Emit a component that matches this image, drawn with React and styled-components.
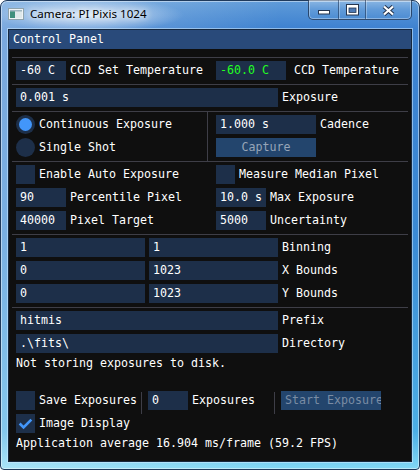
import React from 'react';
import styled, { createGlobalStyle } from 'styled-components';

const MONO = `"DejaVu Sans Mono", "Liberation Mono", monospace`;

const GlobalStyle = createGlobalStyle`
  html, body { margin: 0; padding: 0; background: #ffffff; }
  body { width: 420px; height: 470px; overflow: hidden; }
`;

/* ---------- Windows 7 frame ---------- */
const Frame = styled.div`
  position: relative;
  width: 420px;
  height: 470px;
  box-sizing: border-box;
  display: flex;
  flex-direction: column;
  border: 1px solid #1f3a5c;
  border-radius: 7px 7px 4px 4px;
  box-shadow: inset 0 0 0 1px rgba(255, 255, 255, 0.45);
  background:
    radial-gradient(ellipse 95px 17px at 88px 14px, rgba(255,255,255,0.75), rgba(255,255,255,0) 100%),
    linear-gradient(90deg, rgba(255,255,255,0.32) 0px, rgba(255,255,255,0) 280px),
    linear-gradient(180deg, #5f9bd9 0px, #3c80cf 29px, #3b8ad5 50%, #4caee6 92%, #82d8f5 100%);
`;

const TitleBar = styled.div`
  height: 28px;
  flex: none;
  display: flex;
  align-items: flex-start;
`;

const AppIcon = styled.svg`
  flex: none;
  margin: 7px 0 0 7px;
`;

const TitleText = styled.span`
  margin: 5px 0 0 6px;
  font-family: "Noto Sans", "Open Sans", sans-serif;
  font-size: 11.6px;
  line-height: 16px;
  color: #000;
  text-shadow: 0 0 6px rgba(255,255,255,0.95), 0 0 10px rgba(255,255,255,0.8);
`;

const CaptionGroup = styled.div`
  margin: -1px 7px 0 auto;
  height: 20px;
  display: flex;
  box-sizing: border-box;
  border: 1px solid rgba(24, 44, 74, 0.75);
  border-top: none;
  border-radius: 0 0 5px 5px;
  overflow: hidden;
  box-shadow: inset 0 0 0 1px rgba(255,255,255,0.35);
  background: linear-gradient(180deg, rgba(255,255,255,0.28) 0%, rgba(255,255,255,0.08) 50%, rgba(255,255,255,0.02) 100%);
`;

const CaptionButton = styled.div`
  width: ${p => p.$w}px;
  height: 100%;
  box-sizing: border-box;
  display: flex;
  justify-content: center;
  align-items: flex-start;
  padding-top: ${p => p.$top}px;
  border-left: ${p => (p.$first ? 'none' : '1px solid rgba(24, 44, 74, 0.55)')};
  box-shadow: ${p => (p.$first ? 'none' : 'inset 1px 0 0 rgba(255,255,255,0.3)')};
`;

/* ---------- ImGui client ---------- */
const Client = styled.div`
  flex: 1;
  margin: 0 7px 7px;
  border: 1px solid #16283f;
  box-shadow: 0 0 0 1px rgba(210, 235, 255, 0.55);
  background: #0f0f0f;
  display: flex;
  flex-direction: column;
  font-family: ${MONO};
  font-size: 11.63px;
  line-height: 13px;
  color: #ffffff;
`;

const ImTitle = styled.div`
  height: 19px;
  flex: none;
  box-sizing: border-box;
  padding: 3px 4px;
  background: #294a7a;
  white-space: pre;
`;

const Body = styled.div`
  display: flex;
  flex-direction: column;
  gap: 4px;
  padding: 8px 7px;
`;

const Separator = styled.div`
  height: 1px;
  flex: none;
  background: #3e3e47;
  margin: 0 -4px -1px;
`;

const Columns = styled.div`
  display: grid;
  grid-template-columns: 191px 1fr;
  margin: ${p => (p.$divided ? '-3px 0 -4px' : '0')};
`;

const Cell = styled.div`
  display: flex;
  flex-direction: column;
  gap: 4px;
  padding-top: ${p => (p.$divided ? 3 : 0)}px;
  padding-bottom: ${p => (p.$divided ? 4 : 0)}px;
  padding-left: ${p => (p.$right ? 8 : 0)}px;
  border-left: ${p => (p.$right ? `1px solid ${p.$divided ? '#3e3e47' : 'transparent'}` : 'none')};
`;

const Row = styled.div`
  display: flex;
  align-items: center;
  height: 19px;
  flex: none;
`;

const Field = styled.div`
  flex: none;
  box-sizing: border-box;
  width: ${p => p.$w}px;
  height: 19px;
  padding: 3px 4px;
  margin-left: ${p => p.$gap || 0}px;
  background: #1d2f49;
  color: ${p => p.$color || '#ffffff'};
  white-space: pre;
  overflow: hidden;
`;

const Label = styled.span`
  margin-left: ${p => (p.$gap ?? 4)}px;
  white-space: pre;
`;

const TextLine = styled.div`
  height: 13px;
  flex: none;
  white-space: pre;
`;

const Box = styled.div`
  flex: none;
  width: 19px;
  height: 19px;
  background: #1d2f49;
  display: flex;
`;

const RadioOuter = styled.div`
  flex: none;
  width: 19px;
  height: 19px;
  border-radius: 50%;
  background: #1d2f49;
  display: flex;
  align-items: center;
  justify-content: center;
`;

const RadioDot = styled.div`
  width: 13px;
  height: 13px;
  border-radius: 50%;
  background: #4296fa;
`;

const Button = styled.div`
  flex: none;
  box-sizing: border-box;
  width: ${p => p.$w}px;
  height: 19px;
  margin-left: ${p => p.$gap || 0}px;
  padding: 3px 4px;
  background: #23456d;
  color: ${p => p.$color};
  display: flex;
  justify-content: ${p => p.$align || 'center'};
  white-space: pre;
  overflow: hidden;
`;

const VSep = styled.div`
  flex: none;
  align-self: flex-start;
  width: 1px;
  height: 22px;
  margin-top: 1px;
  margin-left: ${p => p.$gap}px;
  background: #3e3e47;
`;

const Checkbox = ({ checked }) => (
  <Box>
    {checked && (
      <svg width="19" height="19" viewBox="0 0 19 19">
        <polyline points="3.65,9.5 7.55,13.4 15.35,5.6" fill="none" stroke="#4296fa" strokeWidth="2.6" />
      </svg>
    )}
  </Box>
);

const Radio = ({ active }) => <RadioOuter>{active && <RadioDot />}</RadioOuter>;

export default function App() {
  return (
    <>
      <GlobalStyle />
      <Frame>
        <TitleBar>
          <AppIcon width="16" height="12" viewBox="0 0 16 12">
            <rect x="0.5" y="0.5" width="15" height="11" fill="#eef3f6" stroke="#8fa3ad" />
            <rect x="2" y="2" width="5" height="8" fill="#3f8f7c" />
            <rect x="7" y="2" width="7" height="8" fill="#dfe8ea" />
            <rect x="2" y="2" width="12" height="1.5" fill="#9fb6c0" />
          </AppIcon>
          <TitleText>Camera: PI Pixis 1024</TitleText>
          <CaptionGroup>
            <CaptionButton $w={29} $top={10} $first>
              <svg width="12" height="5" viewBox="0 0 12 5">
                <rect x="0.5" y="0.5" width="11" height="3.5" fill="#ffffff" stroke="#263650" />
              </svg>
            </CaptionButton>
            <CaptionButton $w={27} $top={4}>
              <svg width="13" height="12" viewBox="0 0 13 12">
                <rect x="0.5" y="0.5" width="12" height="10.5" fill="#ffffff" stroke="#263650" />
                <rect x="3" y="4" width="7" height="4.5" fill="#4c79b4" stroke="#263650" strokeWidth="0.8" />
              </svg>
            </CaptionButton>
            <CaptionButton $w={46} $top={5}>
              <svg width="13" height="11" viewBox="0 0 13 11">
                <path d="M2 1.5 L11 9.5 M11 1.5 L2 9.5" stroke="#263650" strokeWidth="4.2" />
                <path d="M2 1.5 L11 9.5 M11 1.5 L2 9.5" stroke="#ffffff" strokeWidth="2.2" />
              </svg>
            </CaptionButton>
          </CaptionGroup>
        </TitleBar>

        <Client>
          <ImTitle>Control Panel</ImTitle>
          <Body>
            <Separator />
            <Columns>
              <Cell>
                <Row>
                  <Field $w={50}>-60 C</Field>
                  <Label>CCD Set Temperature</Label>
                </Row>
              </Cell>
              <Cell $right>
                <Row>
                  <Field $w={70} $color="#22ff22">-60.0 C</Field>
                  <Label $gap={8}>CCD Temperature</Label>
                </Row>
              </Cell>
            </Columns>
            <Separator />
            <Row>
              <Field $w={262}>0.001 s</Field>
              <Label>Exposure</Label>
            </Row>
            <Separator />
            <Columns $divided>
              <Cell $divided>
                <Row>
                  <Radio active />
                  <Label>Continuous Exposure</Label>
                </Row>
                <Row>
                  <Radio />
                  <Label>Single Shot</Label>
                </Row>
              </Cell>
              <Cell $divided $right>
                <Row>
                  <Field $w={100}>1.000 s</Field>
                  <Label>Cadence</Label>
                </Row>
                <Row>
                  <Button $w={100} $color="#97a5b8">Capture</Button>
                </Row>
              </Cell>
            </Columns>
            <Separator />
            <Columns>
              <Cell>
                <Row>
                  <Checkbox />
                  <Label>Enable Auto Exposure</Label>
                </Row>
                <Row>
                  <Field $w={50}>90</Field>
                  <Label>Percentile Pixel</Label>
                </Row>
                <Row>
                  <Field $w={50}>40000</Field>
                  <Label>Pixel Target</Label>
                </Row>
              </Cell>
              <Cell $right>
                <Row>
                  <Checkbox />
                  <Label>Measure Median Pixel</Label>
                </Row>
                <Row>
                  <Field $w={50}>10.0 s</Field>
                  <Label>Max Exposure</Label>
                </Row>
                <Row>
                  <Field $w={50}>5000</Field>
                  <Label>Uncertainty</Label>
                </Row>
              </Cell>
            </Columns>
            <Separator />
            <Row>
              <Field $w={129}>1</Field>
              <Field $w={129} $gap={4}>1</Field>
              <Label>Binning</Label>
            </Row>
            <Row>
              <Field $w={129}>0</Field>
              <Field $w={129} $gap={4}>1023</Field>
              <Label>X Bounds</Label>
            </Row>
            <Row>
              <Field $w={129}>0</Field>
              <Field $w={129} $gap={4}>1023</Field>
              <Label>Y Bounds</Label>
            </Row>
            <Separator />
            <Row>
              <Field $w={262}>hitmis</Field>
              <Label>Prefix</Label>
            </Row>
            <Row>
              <Field $w={262}>{'.\\fits\\'}</Field>
              <Label>Directory</Label>
            </Row>
            <TextLine>Not storing exposures to disk.</TextLine>
            <TextLine> </TextLine>
            <Row>
              <Checkbox />
              <Label>Save Exposures</Label>
              <VSep $gap={4} />
              <Field $w={40} $gap={6}>0</Field>
              <Label>Exposures</Label>
              <VSep $gap={19} />
              <Button $w={100} $gap={6} $align="flex-start" $color="#7a8ca4">Start Exposure</Button>
            </Row>
            <Row>
              <Checkbox checked />
              <Label>Image Display</Label>
            </Row>
            <TextLine>Application average 16.904 ms/frame (59.2 FPS)</TextLine>
          </Body>
        </Client>
      </Frame>
    </>
  );
}
